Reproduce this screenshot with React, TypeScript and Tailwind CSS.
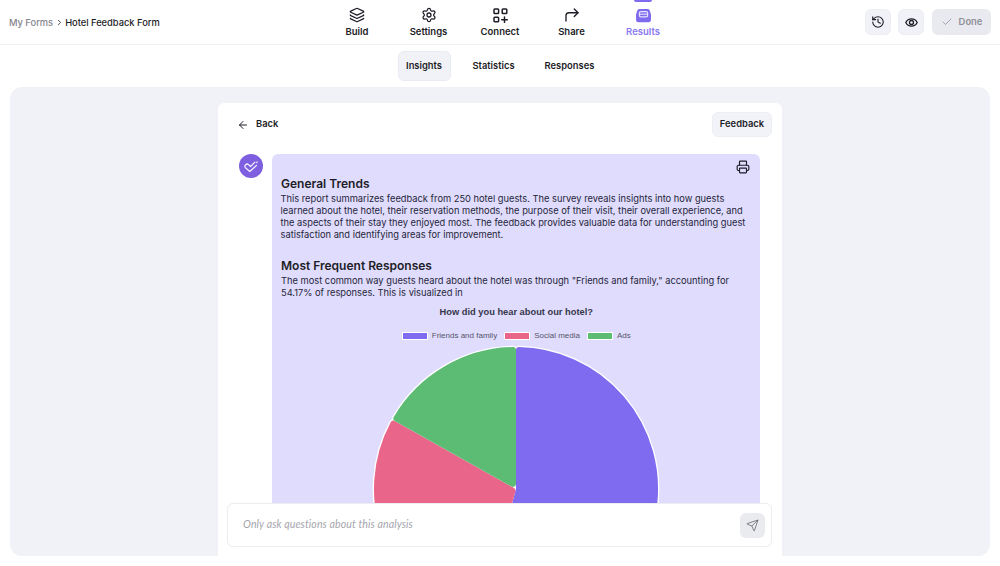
import React from "react";
import { ArrowLeft, Check, ChevronRight, CornerUpRight, History, Layers, Printer, Send, Settings } from "lucide-react";

function ConnectIcon() {
  return (
    <svg width="15" height="15" viewBox="0 0 15 15" fill="none" stroke="#1d1d27" strokeWidth="1.5" strokeLinecap="round" strokeLinejoin="round">
      <rect x="1" y="1" width="4.6" height="4.6" rx="0.8" />
      <rect x="9.2" y="1" width="4.6" height="4.6" rx="0.8" />
      <rect x="1" y="9.2" width="4.6" height="4.6" rx="0.8" />
      <path d="M11.5 9v5.6M8.7 11.8h5.6" />
    </svg>
  );
}

function ResultsIcon() {
  return (
    <svg width="15" height="15" viewBox="0 0 15 15" fill="none">
      <path d="M3.4 1h8.2c1 0 1.8.7 2.1 1.6L15 6.4V12c0 1.2-1 2.2-2.2 2.2H2.2C1 14.2 0 13.2 0 12V6.4l1.3-3.8C1.6 1.7 2.4 1 3.4 1Z" fill="#7e6bef" />
      <rect x="3.4" y="3.6" width="8.2" height="5.2" rx="1.4" stroke="#e6e2fd" strokeWidth="1.2" />
      <path d="M3.4 6.2h8.2" stroke="#e6e2fd" strokeWidth="1.1" />
    </svg>
  );
}

function EyeIcon() {
  return (
    <svg width="13" height="13" viewBox="0 0 13 13" fill="none" stroke="#1d1d27" strokeWidth="1.3">
      <path d="M.8 6.5C2 4 4 2.8 6.5 2.8S11 4 12.2 6.5C11 9 9 10.2 6.5 10.2S2 9 .8 6.5Z" />
      <circle cx="6.5" cy="6.5" r="2" />
    </svg>
  );
}

function AvatarIcon() {
  return (
    <svg width="24" height="24" viewBox="0 0 24 24" fill="none">
      <circle cx="12" cy="12" r="12" fill="#7e5fe0" />
      <g stroke="#f3f0ff" strokeWidth="1.2" strokeLinecap="round" strokeLinejoin="round">
        <path d="M6.5 10.8c-1 1-.8 2 0 2.9l4.3 3.8 6.6-6" />
        <path d="M6.5 10.8c1-1 2.2-1 3.2 0l1.9 1.7 4.3-4.4" />
        <path d="m17.6 8.6.7-.7" />
      </g>
    </svg>
  );
}

function NavItem({ icon, label, active }: { icon: React.ReactNode; label: string; active?: boolean }) {
  return (
    <div className="relative flex h-[44px] w-[71.5px] flex-col items-center pt-[7px]">
      {active && <div className="absolute left-[27px] top-0 h-[2px] w-[18px] rounded-b-sm bg-[#7e6bef]" />}
      <div className="flex h-[16px] items-center justify-center">{icon}</div>
      <div className={`mt-[1px] text-[9.5px] font-semibold leading-[16px] ${active ? "text-[#8a78f0]" : "text-[#1d1d27]"}`}>{label}</div>
    </div>
  );
}

function Pie() {
  const purple = "M147 144.4L147 6A138 138 0 1 1 111.2 278Z";
  const pink = "M140.5 145.5L105.4 276.5A138 138 0 0 1 22.2 79.1Z";
  const green = "M141 138.9L25.2 73.9A138 138 0 0 1 141 6Z";
  return (
    <svg width="290" height="290" viewBox="0 0 288 288" className="mx-auto mt-[3px] block" strokeLinejoin="round">
      <g stroke="#ffffff" strokeWidth="8.6" fill="#ffffff">
        <path d={purple} />
        <path d={pink} />
        <path d={green} />
      </g>
      <path d={purple} fill="#7e6bef" stroke="#7e6bef" strokeWidth="6" />
      <path d={pink} fill="#e9668a" stroke="#e9668a" strokeWidth="6" />
      <path d={green} fill="#5cbc74" stroke="#5cbc74" strokeWidth="6" />
    </svg>
  );
}

function LegendItem({ color, label }: { color: string; label: string }) {
  return (
    <div className="flex items-center gap-[4px]">
      <span className={`block h-[8px] w-[26px] border border-white ${color}`} />
      <span>{label}</span>
    </div>
  );
}

export default function App() {
  return (
    <div className="flex h-[566px] w-full flex-col overflow-hidden bg-white text-[#1d1d27] [font-family:Inter,'Liberation_Sans',sans-serif]">
      <header className="flex h-[45px] shrink-0 items-center border-b border-[#eeeff3] pl-[9px] pr-[9px]">
        <div className="flex flex-1 items-center pt-[1px] text-[9.3px] font-medium">
          <span className="text-[#85858e]">My Forms</span>
          <ChevronRight className="mx-[1.5px] text-[#44444c]" size={9} strokeWidth={2.5} />
          <span>Hotel Feedback Form</span>
        </div>
        <nav className="flex">
          <NavItem icon={<Layers size={16} strokeWidth={1.9} />} label="Build" />
          <NavItem icon={<Settings size={16} strokeWidth={1.9} />} label="Settings" />
          <NavItem icon={<ConnectIcon />} label="Connect" />
          <NavItem icon={<CornerUpRight size={18} strokeWidth={1.8} />} label="Share" />
          <NavItem icon={<ResultsIcon />} label="Results" active />
        </nav>
        <div className="flex flex-1 items-center justify-end gap-[7px]">
          <button className="flex h-[26px] w-[26px] items-center justify-center rounded-md border border-[#eceef4] bg-[#f1f2f7]">
            <History size={14} strokeWidth={1.9} />
          </button>
          <button className="flex h-[26px] w-[26px] items-center justify-center rounded-md border border-[#eceef4] bg-[#f1f2f7]">
            <EyeIcon />
          </button>
          <button className="ml-[1px] flex h-[26px] w-[59px] items-center justify-center gap-[6px] rounded-md bg-[#e9eaef] text-[9.4px] font-semibold text-[#8e8e98]">
            <Check size={12} strokeWidth={1.5} />
            Done
          </button>
        </div>
      </header>

      <div className="flex h-[42px] shrink-0 items-center justify-center text-[9.4px] font-semibold">
        <div className="flex h-[30px] w-[53px] items-center justify-center rounded-md border border-[#e9ebf3] bg-[#f1f2f8]">Insights</div>
        <div className="flex h-[30px] w-[86px] items-center justify-center">Statistics</div>
        <div className="flex h-[30px] w-[66px] items-center justify-center">Responses</div>
      </div>

      <main className="mx-[10px] flex h-[469px] shrink-0 justify-center rounded-xl bg-[#f1f2f8] pt-[16px]">
        <section className="flex h-[453px] w-[564px] flex-col overflow-hidden rounded-t-md bg-white">
          <div className="flex h-[51px] shrink-0 items-start justify-between pl-[19px] pr-[10px] pt-[9px]">
            <div className="flex h-[25px] items-center gap-[7px] text-[9.4px] font-semibold">
              <ArrowLeft size={12} strokeWidth={2} />
              Back
            </div>
            <button className="flex h-[25px] w-[60px] items-center justify-center rounded-md border border-[#eceef4] bg-[#f2f3f8] text-[9.4px] font-semibold">
              Feedback
            </button>
          </div>
          <div className="flex min-h-0 flex-1 overflow-hidden pl-[21px]">
            <div className="mr-[9px] shrink-0">
              <AvatarIcon />
            </div>
            <article className="relative h-[500px] w-[488px] rounded-t-md bg-[#e0dcfd] pl-[8.5px] pr-[8px] pt-[22px]">
              <Printer className="absolute right-[10px] top-[6px]" size={14} strokeWidth={2} />
              <h2 className="pl-[0.5px] text-[12px] font-semibold leading-[15px]">General Trends</h2>
              <p className="mt-[1.5px] text-[9.3px] leading-[12.2px] text-[#26263a]">
                This report summarizes feedback from 250 hotel guests. The survey reveals insights into how guests learned about the hotel, their reservation methods, the purpose of their visit, their overall experience, and the aspects of their stay they enjoyed most. The feedback provides valuable data for understanding guest satisfaction and identifying areas for improvement.
              </p>
              <h2 className="mt-[16.5px] pl-[0.5px] text-[12px] font-semibold leading-[15px]">Most Frequent Responses</h2>
              <p className="mt-[2px] pl-[0.5px] text-[9.3px] leading-[12.2px] text-[#26263a]">
                The most common way guests heard about the hotel was through "Friends and family," accounting for 54.17% of responses. This is visualized in
              </p>
              <div className="mt-[7px] text-center text-[9.3px] font-bold leading-[13px] text-[#37374a] [font-family:'Liberation_Sans',sans-serif]">How did you hear about our hotel?</div>
              <div className="mt-[12px] flex h-[10px] items-center justify-center gap-[7px] text-[8px] text-[#55556a] [font-family:'Liberation_Sans',sans-serif]">
                <LegendItem color="bg-[#7e6bef]" label="Friends and family" />
                <LegendItem color="bg-[#e9668a]" label="Social media" />
                <LegendItem color="bg-[#5cbc74]" label="Ads" />
              </div>
              <Pie />
            </article>
          </div>
          <div className="mx-[9px] mb-[9px] flex h-[44px] w-[545px] shrink-0 items-center justify-between rounded-md border border-[#ececf1] bg-white pl-[15px] pr-[6px]">
            <span className="text-[10.6px] italic tracking-[0.1px] text-[#a6a6ae] [font-family:Lato,sans-serif]">Only ask questions about this analysis</span>
            <button className="flex h-[25px] w-[25px] items-center justify-center rounded-md bg-[#eaebef]">
              <Send size={13} strokeWidth={1.3} className="text-[#55555f]" />
            </button>
          </div>
        </section>
      </main>
    </div>
  );
}
